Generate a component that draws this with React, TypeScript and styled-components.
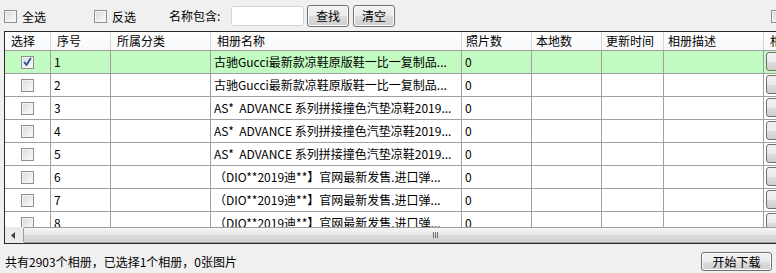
import styled, { createGlobalStyle } from "styled-components";

const GlobalStyle = createGlobalStyle`
  html, body {
    margin: 0;
    padding: 0;
    background: #f0f0f0;
    overflow: hidden;
  }
  body {
    font-family: "Noto Sans CJK SC", "Noto Sans", sans-serif;
    font-size: 12px;
    color: #000;
  }
`;

const columns = "46px 60px 100px 251px 70px 70px 62px 100px 120px";

const headers = ["选择", "序号", "所属分类", "相册名称", "照片数", "本地数", "更新时间", "相册描述", "相册操作"];

const gucci = "古驰Gucci最新款凉鞋原版鞋一比一复制品...";
const asics = "AS*  ADVANCE 系列拼接撞色汽垫凉鞋2019...";
const dior = "（DIO**2019迪**】官网最新发售.进口弹...";

const rows = [
    {id: 1, name: gucci, checked: true},
    {id: 2, name: gucci, checked: false},
    {id: 3, name: asics, checked: false},
    {id: 4, name: asics, checked: false},
    {id: 5, name: asics, checked: false},
    {id: 6, name: dior, checked: false},
    {id: 7, name: dior, checked: false},
    {id: 8, name: dior, checked: false},
];

const CheckBox = ({checked = false}: { checked?: boolean }) => (
    <Box>
        {checked && (
            <svg width="11" height="11" viewBox="0 0 11 11">
                <path d="M2.5 5.5 L4.5 8 L8.5 1.5" stroke="#2d4f9e" strokeWidth="1.8" fill="none"
                      strokeLinecap="round" strokeLinejoin="round"/>
            </svg>
        )}
    </Box>
);

export default function App() {
    return (
        <Window>
            <GlobalStyle/>
            <Toolbar>
                <Toggle width={90}><CheckBox/><span>全选</span></Toggle>
                <Toggle width={75}><CheckBox/><span>反选</span></Toggle>
                <FieldLabel>名称包含:</FieldLabel>
                <SearchInput/>
                <Button>查找</Button>
                <Button>清空</Button>
                <EdgeBox><CheckBox/></EdgeBox>
            </Toolbar>
            <Grid>
                <Header>
                    {headers.map(h => <HeaderCell key={h}>{h}</HeaderCell>)}
                </Header>
                <Body>
                    {rows.map(r => (
                        <Row key={r.id} selected={r.checked}>
                            <CheckCell><CheckBox checked={r.checked}/></CheckCell>
                            <Cell>{r.id}</Cell>
                            <Cell/>
                            <Cell>{r.name}</Cell>
                            <Cell>0</Cell>
                            <Cell/>
                            <Cell/>
                            <Cell/>
                            <ActionCell><RowButton/></ActionCell>
                        </Row>
                    ))}
                </Body>
                <ScrollBar>
                    <ArrowButton>
                        <svg width="4" height="7" viewBox="0 0 4 7">
                            <path d="M4 0 L0 3.5 L4 7 Z" fill="#404040"/>
                        </svg>
                    </ArrowButton>
                    <Thumb><Grip/></Thumb>
                </ScrollBar>
            </Grid>
            <StatusBar>
                <span>共有2903个相册，已选择1个相册，0张图片</span>
                <Button wide>开始下载</Button>
            </StatusBar>
        </Window>
    );
}

const Window = styled.div`
    width: 776px;
    height: 273px;
    display: flex;
    flex-direction: column;
    overflow: hidden;
`

const Toolbar = styled.div`
    height: 31px;
    display: flex;
    align-items: center;
    padding-left: 4px;
    flex-shrink: 0;
`

const Toggle = styled.label<{ width: number }>`
    width: ${p => p.width}px;
    display: flex;
    align-items: center;
    gap: 5px;
    margin-top: 1px;
`

const Box = styled.span`
    width: 13px;
    height: 13px;
    box-sizing: border-box;
    border: 1px solid #8e8f8f;
    background: linear-gradient(135deg, #d8d8d8, #f6f6f6 80%, #ffffff);
    box-shadow: inset 0 0 0 1px #f4f4f4;
    display: flex;
    align-items: center;
    justify-content: center;
    flex-shrink: 0;
`

const EdgeBox = styled.div`
    margin-left: auto;
    margin-right: -8px;
    margin-top: 2px;
`

const FieldLabel = styled.span`
    width: 62px;
`

const SearchInput = styled.input`
    width: 73px;
    height: 20px;
    box-sizing: border-box;
    border: 1px solid #d6d6d6;
    border-radius: 2px;
    background: #fff;
    margin-right: 3px;
    outline: none;
`

const Button = styled.button<{ wide?: boolean }>`
    width: ${p => p.wide ? 71 : 42}px;
    height: ${p => p.wide ? 19 : 22}px;
    box-sizing: border-box;
    margin-right: 4px;
    padding: 0;
    border: 1px solid #707070;
    border-radius: 3px;
    background: linear-gradient(#f2f2f2, #ebebeb 50%, #dddddd 51%, #cfcfcf);
    box-shadow: inset 0 0 0 1px #fcfcfc;
    font-family: inherit;
    font-size: 12px;
    color: #000;
    line-height: 1;
`

const Grid = styled.div`
    margin-left: 4px;
    width: 900px;
    height: 213px;
    box-sizing: border-box;
    border: 1px solid #2a2a2a;
    background: #fff;
    display: flex;
    flex-direction: column;
    overflow: hidden;
    flex-shrink: 0;
`

const Header = styled.div`
    display: grid;
    grid-template-columns: ${columns};
    height: 18px;
    border-bottom: 1px solid #a0a0a0;
    background: linear-gradient(#ffffff, #f7f8fa);
    flex-shrink: 0;
`

const HeaderCell = styled.div`
    padding-left: 6px;
    border-right: 1px solid #d5d5d5;
    line-height: 18px;
    white-space: nowrap;
    overflow: hidden;
    &:nth-child(5), &:nth-child(6), &:nth-child(7), &:nth-child(8) {
        padding-left: 4px;
    }
`

const Body = styled.div`
    flex: 1;
    overflow: hidden;
`

const Row = styled.div<{ selected: boolean }>`
    display: grid;
    grid-template-columns: ${columns};
    height: 22px;
    border-bottom: 1px solid #a0a0a0;
    background: ${p => p.selected ? "#c1fbc1" : "#ffffff"};
`

const Cell = styled.div`
    padding-left: 3px;
    border-right: 1px solid #a0a0a0;
    line-height: 22px;
    white-space: pre;
    overflow: hidden;
`

const CheckCell = styled(Cell)`
    padding-left: 0;
    display: flex;
    align-items: center;
    justify-content: center;
`

const ActionCell = styled(Cell)`
    padding: 1px 0 0 2px;
`

const RowButton = styled.div`
    width: 40px;
    height: 19px;
    box-sizing: border-box;
    border: 1px solid #707070;
    border-radius: 3px;
    background: linear-gradient(#f2f2f2, #ebebeb 50%, #dddddd 51%, #cfcfcf);
`

const ScrollBar = styled.div`
    height: 16px;
    display: flex;
    background: #eaeaea;
    flex-shrink: 0;
`

const ArrowButton = styled.div`
    width: 17px;
    display: flex;
    align-items: center;
    justify-content: center;
`

const Thumb = styled.div`
    margin-left: 1px;
    width: 900px;
    box-sizing: border-box;
    border: 1px solid #9c9c9c;
    border-radius: 2px;
    background: linear-gradient(#f6f6f6, #e6e6e6 50%, #d8d8d8 51%, #d2d2d2);
    display: flex;
    align-items: center;
`

const Grip = styled.div`
    margin-left: 409px;
    width: 6px;
    height: 6px;
    background: repeating-linear-gradient(90deg, #6d6d6d 0 1px, transparent 1px 2px);
`

const StatusBar = styled.div`
    flex: 1;
    display: flex;
    align-items: center;
    justify-content: space-between;
    padding: 6px 0 0 5px;
`
